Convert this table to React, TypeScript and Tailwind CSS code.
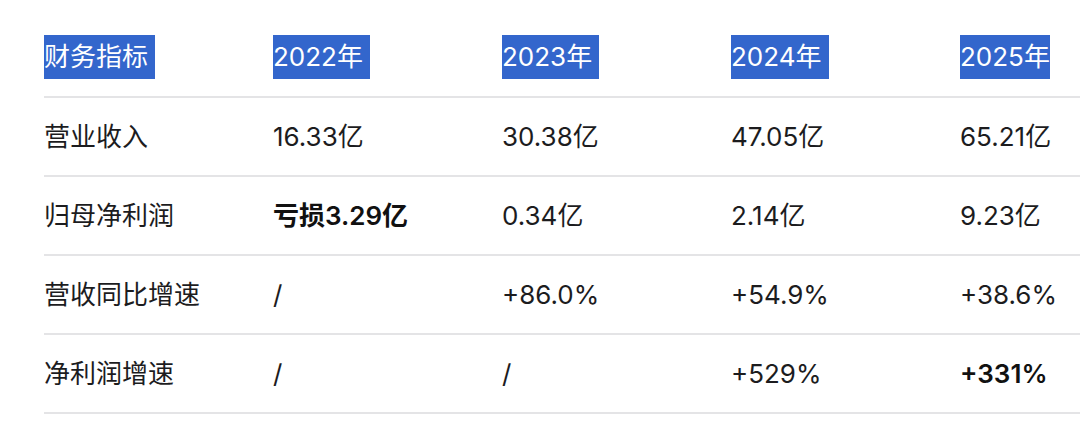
import React from 'react';

interface Cell {
  text: string;
  bold?: boolean;
}

const headers = ['财务指标', '2022年', '2023年', '2024年', '2025年'];

const rows: Cell[][] = [
  [{ text: '营业收入' }, { text: '16.33亿' }, { text: '30.38亿' }, { text: '47.05亿' }, { text: '65.21亿' }],
  [{ text: '归母净利润' }, { text: '亏损3.29亿', bold: true }, { text: '0.34亿' }, { text: '2.14亿' }, { text: '9.23亿' }],
  [{ text: '营收同比增速' }, { text: '/' }, { text: '+86.0%' }, { text: '+54.9%' }, { text: '+38.6%' }],
  [{ text: '净利润增速' }, { text: '/' }, { text: '/' }, { text: '+529%' }, { text: '+331%', bold: true }],
];

const App: React.FC = () => {
  return (
    <div
      className="w-[1080px] h-[428px] bg-white overflow-hidden pl-[44px] text-[#1c1c1e] text-[26px]"
      style={{ fontFamily: 'Inter, "Noto Sans CJK SC", sans-serif' }}
    >
      <div className="w-[1036px] overflow-hidden">
        {/* header, highlighted like a text selection */}
        <div className="flex w-[1145px] pt-[35px] pb-[17px] border-b-2 border-[#e4e4e6]">
          {headers.map((h, i) => (
            <div key={i} className="w-[229px] shrink-0 leading-[44px]">
              <span
                className={
                  i < headers.length - 1
                    ? 'bg-[#3366cc] text-white inline-block h-[44px] pr-[7px]'
                    : 'bg-[#3366cc] text-white inline-block h-[44px]'
                }
              >
                {h}
              </span>
            </div>
          ))}
        </div>
        {rows.map((row, r) => (
          <div key={r} className="flex w-[1145px] h-[79px] items-center border-b-2 border-[#e4e4e6]">
            {row.map((cell, c) => (
              <div
                key={c}
                className={
                  cell.bold
                    ? 'w-[229px] shrink-0 font-semibold text-[#111]'
                    : 'w-[229px] shrink-0'
                }
              >
                {cell.text}
              </div>
            ))}
          </div>
        ))}
      </div>
    </div>
  );
};

export default App;
